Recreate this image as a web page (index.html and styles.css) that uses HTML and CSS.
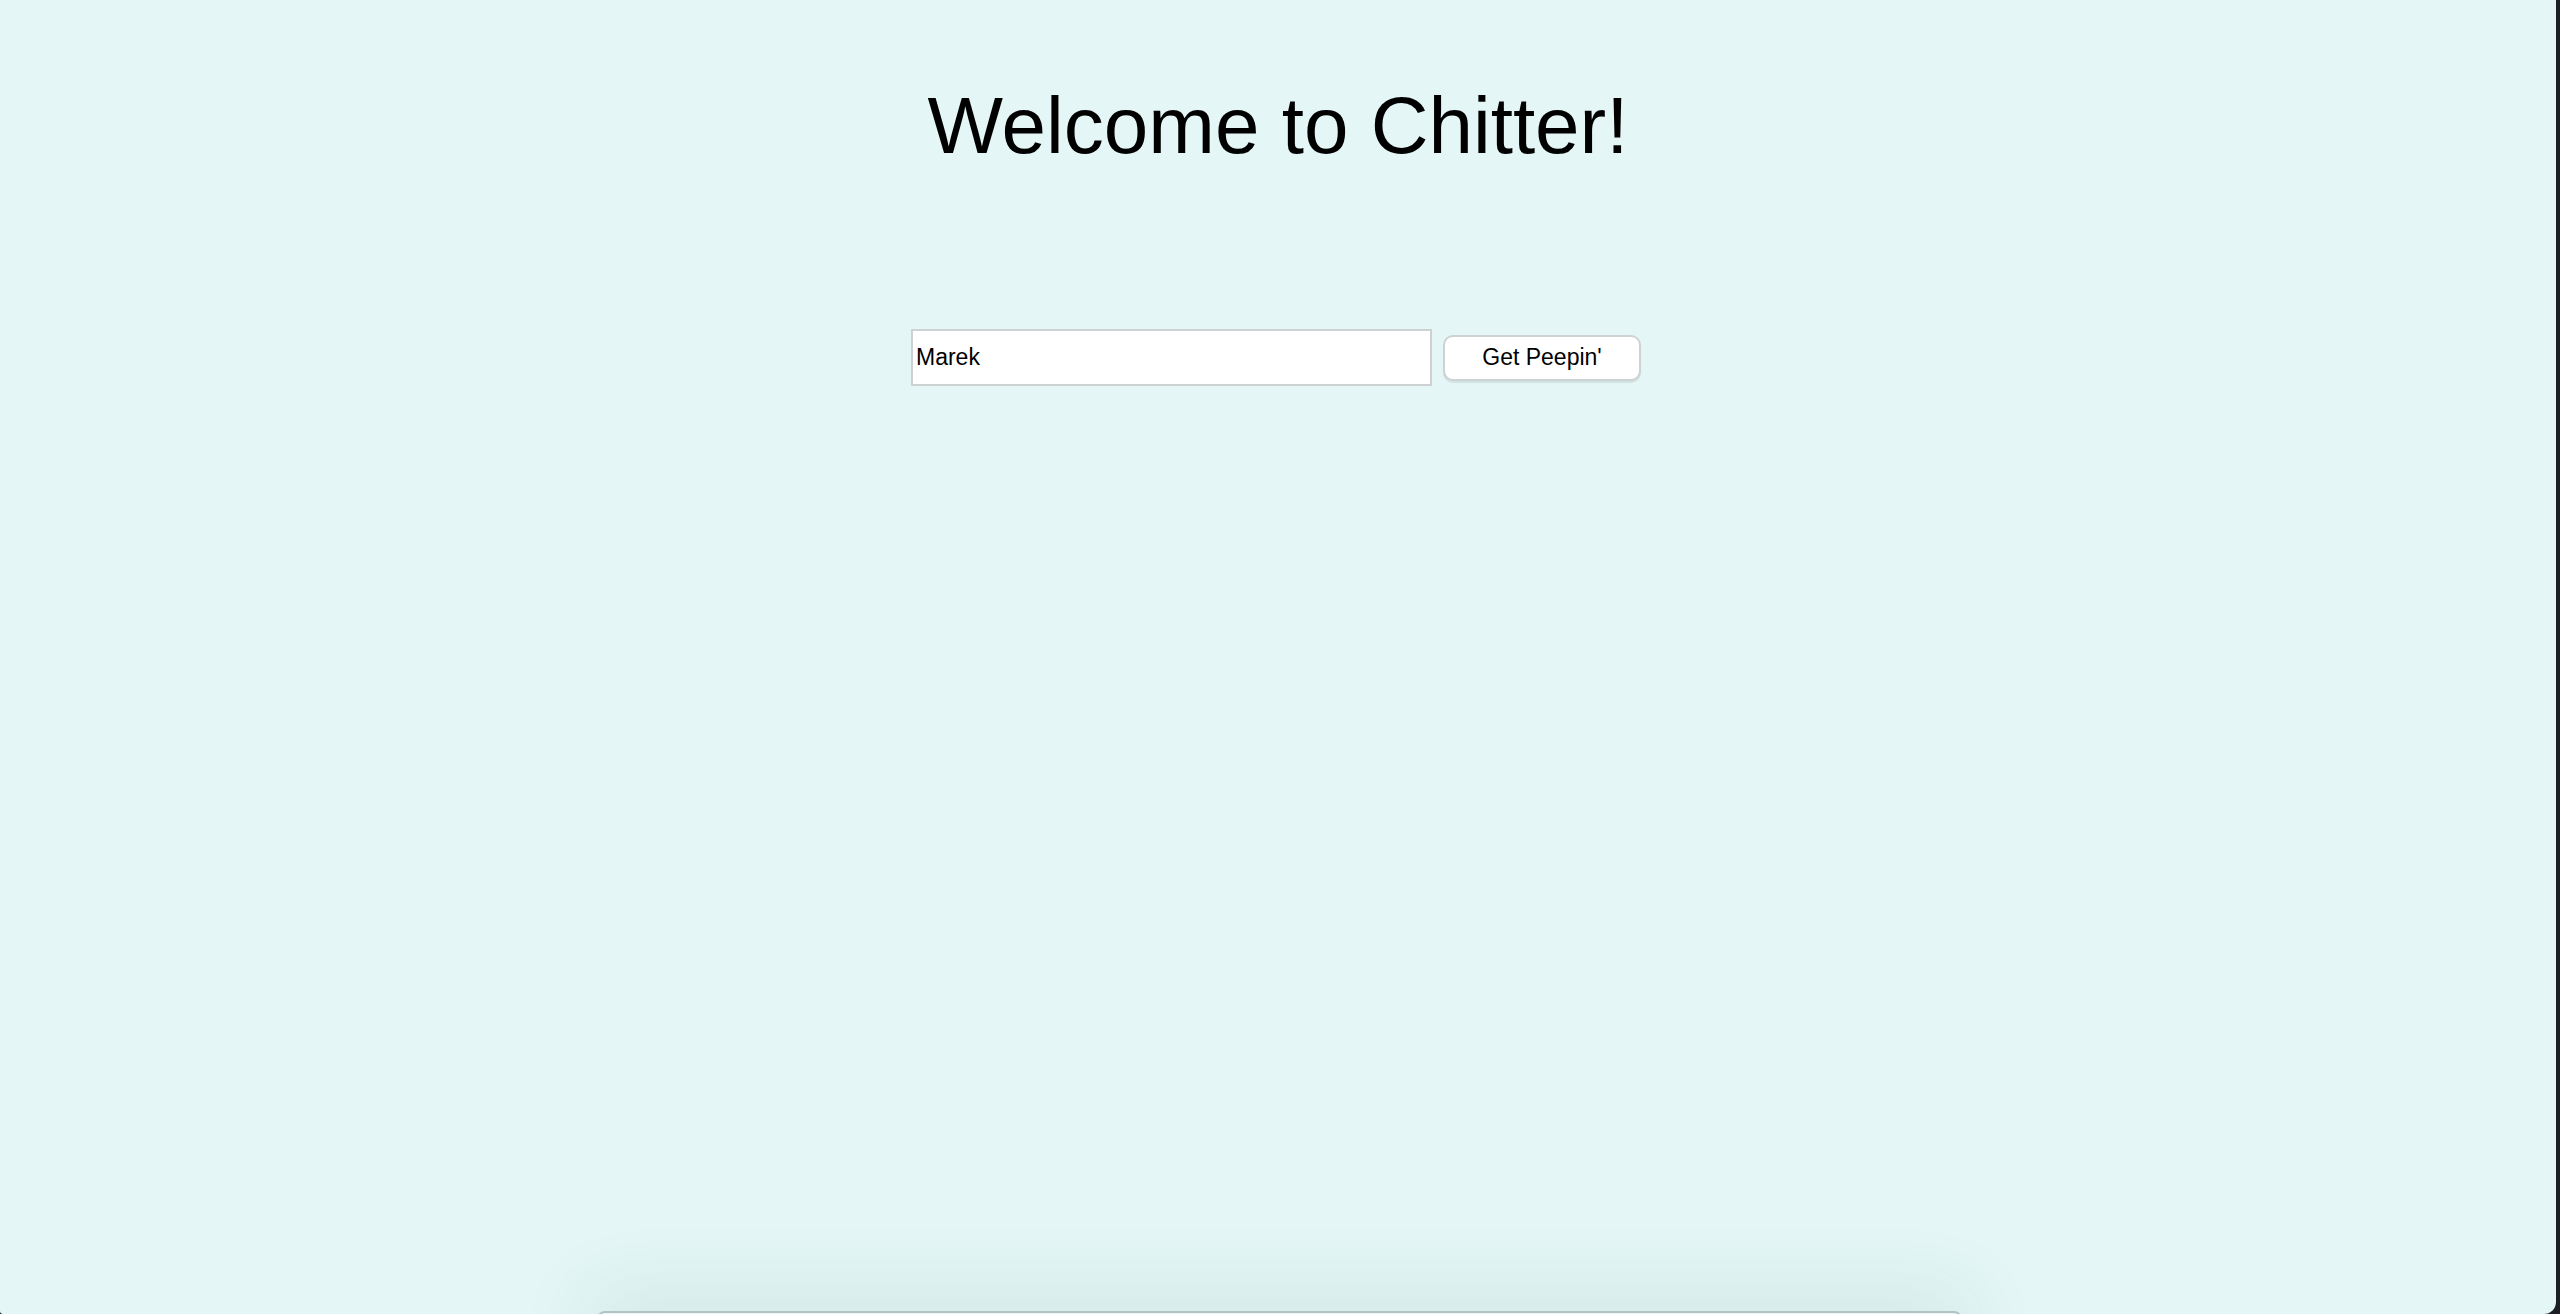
FILE: index.html
```html
<!DOCTYPE html>
<html lang="en">
<head>
<meta charset="utf-8">
<title>Chitter</title>
<link rel="stylesheet" href="styles.css">
</head>
<body>
<div class="window">
  <h1 class="title">Welcome to Chitter!</h1>
  <form class="login" onsubmit="return false;">
    <input class="name-input" type="text" value="Marek">
    <button class="peep-button" type="submit">Get Peepin'</button>
  </form>
  <div class="dock"></div>
</div>
</body>
</html>
```
FILE: styles.css
```css
html, body {
  margin: 0;
  padding: 0;
  height: 100%;
  background: #1c1f23;
  overflow: hidden;
}

.window {
  position: relative;
  width: calc(100% - 4px);
  height: 1314px;
  background: #e4f6f6;
  border-bottom-right-radius: 12px;
  border-bottom-left-radius: 3px;
  overflow: hidden;
  display: flex;
  flex-direction: column;
  align-items: center;
  font-family: "Liberation Sans", Arial, Helvetica, sans-serif;
  color: #000;
}

.title {
  margin: 80px 0 0 0;
  font-size: 80px;
  font-weight: normal;
  line-height: 92px;
}

.login {
  margin-top: 157px;
  display: flex;
  align-items: center;
  gap: 11px;
  transform: translateX(-2px);
}

.name-input {
  box-sizing: border-box;
  width: 521px;
  height: 57px;
  margin: 0;
  padding: 0 3px;
  border: 2px solid #cdd1d1;
  background: #fff;
  font-family: "Liberation Sans", Arial, Helvetica, sans-serif;
  font-size: 23px;
  color: #000;
  outline: none;
}

.peep-button {
  box-sizing: border-box;
  width: 198px;
  height: 46px;
  margin: 0;
  padding: 0;
  border: 2px solid #cdd2d3;
  border-radius: 10px;
  background: #fff;
  box-shadow: 0 2px 1px rgba(0, 0, 0, 0.08);
  font-family: "Liberation Sans", Arial, Helvetica, sans-serif;
  font-size: 23px;
  color: #000;
}

.dock {
  position: absolute;
  left: 597px;
  top: 1311px;
  width: 1365px;
  height: 40px;
  box-sizing: border-box;
  background: #eef3f3;
  border: 2px solid #b3c3c3;
  border-radius: 8px 8px 0 0;
  box-shadow: 0 -6px 80px 6px rgba(40, 90, 90, 0.12);
}
```
